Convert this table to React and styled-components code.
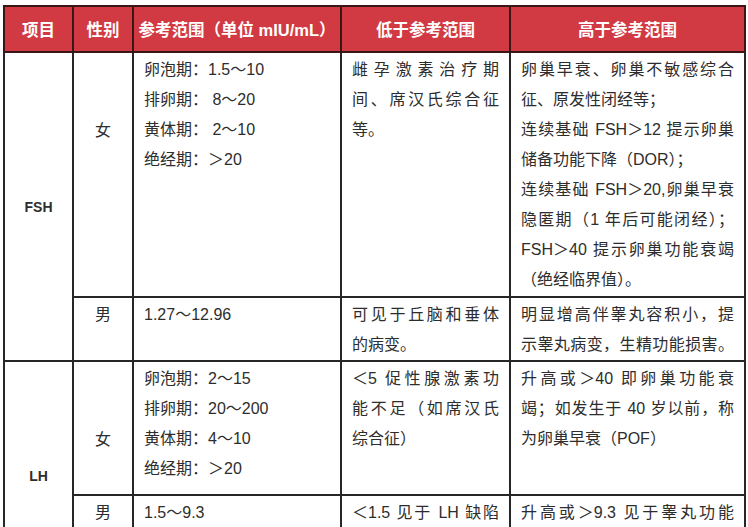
import styled, { createGlobalStyle } from 'styled-components';

const Global = createGlobalStyle`
  html, body {
    margin: 0;
    padding: 0;
    background: #fff;
    overflow: hidden;
  }
  body {
    font-family: "Liberation Sans", "Noto Sans CJK SC", sans-serif;
  }
`;

const Page = styled.div`
  padding: 5px 0 0 3px;
`;

const Table = styled.table`
  border-collapse: collapse;
  table-layout: fixed;
  width: 741px;
  color: #2d2d2d;
  font-size: 16px;
`;

const HeadCell = styled.th`
  height: 44px;
  padding: 0;
  background: #d23a43;
  color: #fff;
  font-size: 16.5px;
  font-weight: 700;
  text-align: center;
  vertical-align: middle;
  border: 2px solid #3b1616;
`;

const Row = styled.tr`
  height: ${p => p.$h}px;
`;

const Cell = styled.td`
  border: 2px solid #262626;
  padding: ${p => p.$top ?? 2}px 10px 0 10px;
  vertical-align: ${p => (p.$middle ? 'middle' : 'top')};
  text-align: ${p => (p.$center ? 'center' : 'left')};
  line-height: 30px;
  font-weight: ${p => (p.$bold ? 700 : 400)};
  font-size: ${p => (p.$bold ? '14px' : '16px')};
`;

const Line = styled.div`
  text-align: ${p => (p.$fill ? 'justify' : 'left')};
  text-align-last: ${p => (p.$fill ? 'justify' : 'auto')};
  white-space: ${p => (p.$fill ? 'normal' : 'nowrap')};
`;

const Lines = ({ items }) =>
  items.map((t, i) =>
    typeof t === 'string' ? (
      <Line key={i}>{t}</Line>
    ) : (
      <Line key={i} $fill>
        {t.f}
      </Line>
    )
  );

const App = () => (
  <Page>
    <Global />
    <Table>
      <colgroup>
        <col style={{ width: 69 }} />
        <col style={{ width: 60 }} />
        <col style={{ width: 208 }} />
        <col style={{ width: 169 }} />
        <col style={{ width: 235 }} />
      </colgroup>
      <thead>
        <tr>
          <HeadCell>项目</HeadCell>
          <HeadCell>性别</HeadCell>
          <HeadCell>参考范围（单位 mIU/mL）</HeadCell>
          <HeadCell>低于参考范围</HeadCell>
          <HeadCell>高于参考范围</HeadCell>
        </tr>
      </thead>
      <tbody>
        <Row $h={245}>
          <Cell rowSpan={2} $center $middle $bold $top={0}>FSH</Cell>
          <Cell $center $top={63}>女</Cell>
          <Cell>
            <Lines items={['卵泡期：1.5～10', '排卵期： 8～20', '黄体期： 2～10', '绝经期：＞20']} />
          </Cell>
          <Cell>
            <Lines items={[{ f: '雌孕激素治疗期' }, { f: '间、席汉氏综合征' }, '等。']} />
          </Cell>
          <Cell>
            <Lines
              items={[
                { f: '卵巢早衰、卵巢不敏感综合' },
                '征、原发性闭经等；',
                { f: '连续基础 FSH＞12 提示卵巢' },
                '储备功能下降（DOR）；',
                { f: '连续基础 FSH＞20,卵巢早衰' },
                { f: '隐匿期（1 年后可能闭经）；' },
                { f: 'FSH＞40 提示卵巢功能衰竭' },
                '（绝经临界值）。',
              ]}
            />
          </Cell>
        </Row>
        <Row $h={61}>
          <Cell $center>男</Cell>
          <Cell>1.27～12.96</Cell>
          <Cell>
            <Lines items={[{ f: '可见于丘脑和垂体' }, '的病变。']} />
          </Cell>
          <Cell>
            <Lines items={[{ f: '明显增高伴睾丸容积小，提' }, { f: '示睾丸病变，生精功能损害。' }]} />
          </Cell>
        </Row>
        <Row $h={134}>
          <Cell rowSpan={2} $center $middle $bold $top={0}>LH</Cell>
          <Cell $center $top={63}>女</Cell>
          <Cell>
            <Lines items={['卵泡期：2～15', '排卵期：20～200', '黄体期：4～10', '绝经期：＞20']} />
          </Cell>
          <Cell>
            <Lines items={[{ f: '＜5 促性腺激素功' }, { f: '能不足（如席汉氏' }, '综合征）']} />
          </Cell>
          <Cell>
            <Lines
              items={[
                { f: '升高或＞40 即卵巢功能衰' },
                { f: '竭；如发生于 40 岁以前，称' },
                '为卵巢早衰（POF）',
              ]}
            />
          </Cell>
        </Row>
        <Row $h={96}>
          <Cell $center>男</Cell>
          <Cell>1.5～9.3</Cell>
          <Cell>
            <Lines items={[{ f: '＜1.5 见于 LH 缺陷' }]} />
          </Cell>
          <Cell>
            <Lines items={[{ f: '升高或＞9.3 见于睾丸功能' }]} />
          </Cell>
        </Row>
      </tbody>
    </Table>
  </Page>
);

export default App;
